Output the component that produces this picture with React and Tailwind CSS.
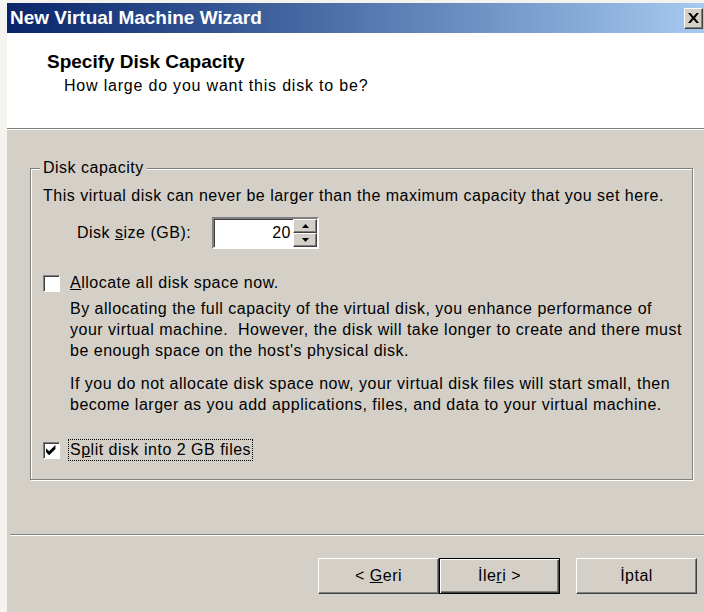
import React from 'react';

const face = "font-['Liberation_Sans',Arial,sans-serif]";

// classic raised 3D edge used by buttons
const raised =
  'bg-[#d4d0c8] border border-t-white border-l-white border-r-[#404040] border-b-[#404040] shadow-[inset_-1px_-1px_0_#808080]';

const Checkbox = ({ checked }) => (
  <span className="w-[17px] h-[17px] shrink-0 bg-white border border-t-[#808080] border-l-[#808080] border-r-white border-b-white shadow-[inset_1px_1px_0_#404040] flex items-center justify-center">
    {checked && (
      <svg width="11" height="11" viewBox="0 0 7 7">
        <path d="M0 2 L2 4 L6 0 L6 2.5 L2 6.5 L0 4.5 Z" fill="#000" />
      </svg>
    )}
  </span>
);

const Spinner = ({ value }) => (
  <div className="flex h-[32px] w-[107px] bg-white border-2 border-t-[#808080] border-l-[#808080] border-r-white border-b-white shadow-[inset_1px_1px_0_#404040]">
    <div className="flex-1 flex items-center justify-end pr-[2px] text-[16px]">{value}</div>
    <div className="w-[24px] flex flex-col">
      <div className={`${raised} flex-1 flex items-center justify-center`}>
        <svg width="7" height="4" viewBox="0 0 7 4"><path d="M3.5 0 L7 4 L0 4 Z" fill="#000" /></svg>
      </div>
      <div className={`${raised} flex-1 flex items-center justify-center`}>
        <svg width="7" height="4" viewBox="0 0 7 4"><path d="M0 0 L7 0 L3.5 4 Z" fill="#000" /></svg>
      </div>
    </div>
  </div>
);

const WizardButton = ({ children, isDefault }) => (
  <button
    className={`h-[36px] w-[121px] text-[16px] tracking-[0.5px] text-black flex items-center justify-center ${
      isDefault
        ? 'bg-[#d4d0c8] border border-black shadow-[inset_1px_1px_0_#fff,inset_-1px_-1px_0_#404040,inset_-2px_-2px_0_#808080]'
        : raised
    }`}
  >
    <span>{children}</span>
  </button>
);

export default function App() {
  return (
    <div className={`${face} w-[704px] h-[612px] bg-[#f4f3f0] pl-[7px] pt-[3px] overflow-hidden text-black`}>
      <div className="h-full flex flex-col bg-[#d4d0c8]">
        <div className="h-[30px] shrink-0 flex items-center justify-between pl-[3px] pr-[1px] bg-gradient-to-r from-[#0a246a] to-[#a6caf0]">
          <span className="text-white font-bold text-[19px] leading-[22px]">New Virtual Machine Wizard</span>
          <div className={`${raised} w-[19px] h-[21px] flex items-center justify-center`}>
            <svg width="11" height="10" viewBox="0 0 11 10">
              <path d="M0 0h2.5l3 3.5 3-3.5H11L7 5l4 5H8.5l-3-3.5-3 3.5H0l4-5Z" fill="#000" />
            </svg>
          </div>
        </div>

        <div className="h-[96px] shrink-0 bg-white border-b border-b-[#808080] shadow-[0_1px_0_#fff] pt-[18px] pl-[40px]">
          <div className="font-bold text-[19px] leading-[22px]">Specify Disk Capacity</div>
          <div className="text-[16px] leading-[20px] tracking-[0.8px] pl-[17px] mt-[3px]">How large do you want this disk to be?</div>
        </div>

        <div className="flex-1 flex flex-col text-[16px] tracking-[0.5px]">
          <div className="relative mt-[39px] ml-[23px] mr-[11px] h-[312px] border border-[#808080] shadow-[inset_1px_1px_0_#fff,1px_1px_0_#fff] pl-[12px] pt-[17px]">
            <span className="absolute -top-[11px] left-[9px] bg-[#d4d0c8] px-[3px] leading-[20px]">Disk capacity</span>
            <p className="leading-[20px]">This virtual disk can never be larger than the maximum capacity that you set here.</p>

            <div className="flex items-center mt-[11px] pl-[34px]">
              <span className="w-[135px]">Disk <u>s</u>ize (GB):</span>
              <Spinner value="20" />
            </div>

            <div className="flex items-center gap-[10px] mt-[22px]">
              <Checkbox />
              <span><u>A</u>llocate all disk space now.</span>
            </div>

            <div className="pl-[27px] mt-[3px] leading-[21px] pr-[4px]">
              <p>
                By allocating the full capacity of the virtual disk, you enhance performance of your virtual machine.&nbsp; However, the disk will take longer to create and there must be enough space on the host's physical disk.
              </p>
              <p className="mt-[12px]">
                If you do not allocate disk space now, your virtual disk files will start small, then become larger as you add applications, files, and data to your virtual machine.
              </p>
            </div>

            <div className="flex items-center gap-[8px] mt-[24px]">
              <Checkbox checked />
              <span className="border border-dotted border-black px-[1px] leading-[20px]">
                S<u>p</u>lit disk into 2 GB files
              </span>
            </div>
          </div>

          <div className="mt-[54px] border-t border-t-[#808080] shadow-[0_1px_0_#fff] ml-[3px]" />

          <div className="flex justify-end mt-[23px] pr-[7px]">
            <WizardButton>
              &lt; <u>G</u>eri
            </WizardButton>
            <WizardButton isDefault>
              İle<u>r</u>i &gt;
            </WizardButton>
            <div className="w-[16px]" />
            <WizardButton>İptal</WizardButton>
          </div>
        </div>
      </div>
    </div>
  );
}
